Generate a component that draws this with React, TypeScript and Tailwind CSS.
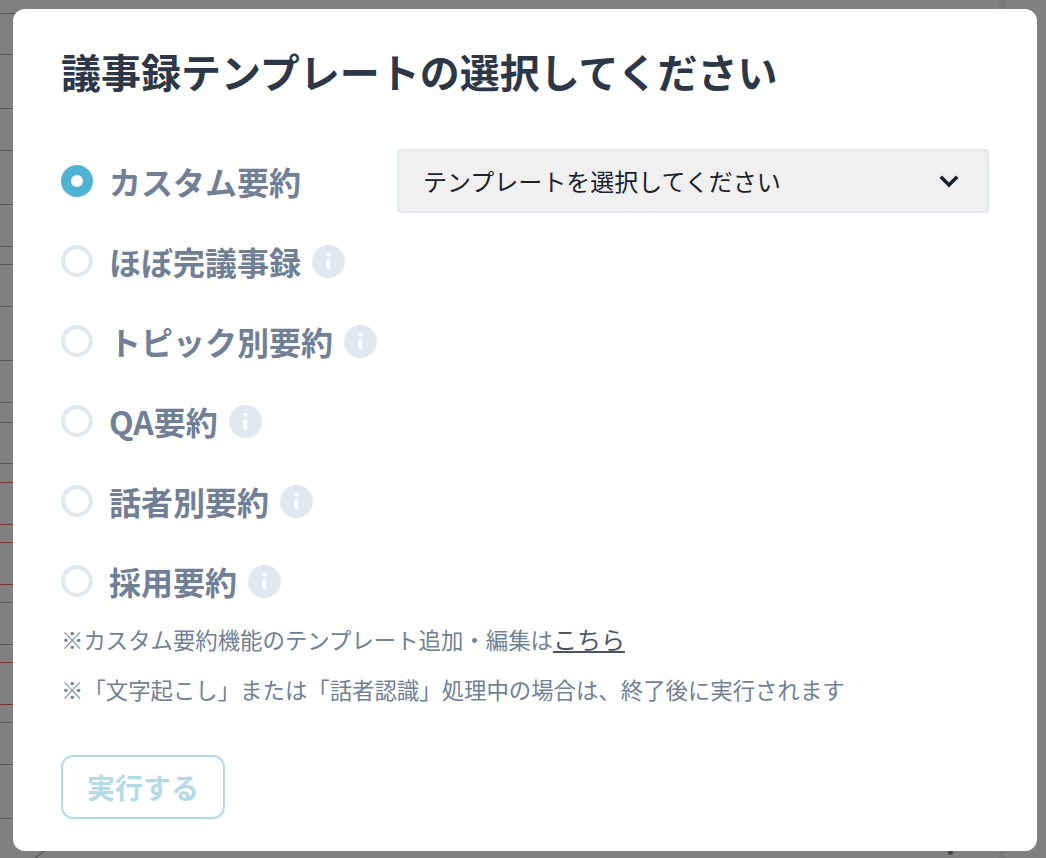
const backdropRows = [
  { h: 'h-[14px]', line: 'border-[#555555]' },
  { h: 'h-[41px]', line: 'border-[#555555]' },
  { h: 'h-[54px]', line: 'border-[#555555]' },
  { h: 'h-[42px]', line: 'border-[#555555]' },
  { h: 'h-[54px]', line: 'border-[#555555]' },
  { h: 'h-[42px]', line: 'border-[#555555]' },
  { h: 'h-[18px]', line: 'border-[#555555]' },
  { h: 'h-[42px]', line: 'border-[#555555]' },
  { h: 'h-[54px]', line: 'border-[#555555]' },
  { h: 'h-[42px]', line: 'border-[#555555]' },
  { h: 'h-[20px]', line: 'border-[#555555]' },
  { h: 'h-[41px]', line: 'border-[#555555]' },
  { h: 'h-[19px]', line: 'border-[#7a3434]' },
  { h: 'h-[42px]', line: 'border-[#7a3434]' },
  { h: 'h-[18px]', line: 'border-[#7a3434]' },
  { h: 'h-[42px]', line: 'border-[#7a3434]' },
  { h: 'h-[18px]', line: 'border-[#555555]' },
  { h: 'h-[42px]', line: 'border-[#555555]' },
  { h: 'h-[18px]', line: 'border-[#7a3434]' },
  { h: 'h-[42px]', line: 'border-[#7a3434]' },
  { h: 'h-[18px]', line: 'border-[#555555]' },
  { h: 'h-[42px]', line: 'border-[#555555]' },
  { h: 'h-[54px]', line: 'border-[#555555]' },
];

const options = [
  { label: 'カスタム要約', selected: true, info: false },
  { label: 'ほぼ完議事録', selected: false, info: true },
  { label: 'トピック別要約', selected: false, info: true },
  { label: 'QA要約', selected: false, info: true },
  { label: '話者別要約', selected: false, info: true },
  { label: '採用要約', selected: false, info: true },
];

const InfoBadge = () => (
  <svg viewBox="0 0 33 33" className="w-[33px] h-[33px] ml-[11px] shrink-0">
    <circle cx="16.5" cy="16.5" r="16.5" fill="#e2e8f0" />
    <rect x="14.7" y="8" width="3.6" height="3.6" rx="1" fill="#ffffff" />
    <rect x="14.7" y="14" width="3.6" height="11" rx="0.8" fill="#ffffff" />
  </svg>
);

const SelectChevron = () => (
  <svg viewBox="0 0 20 13" className="w-5 h-[13px] shrink-0" fill="none">
    <polyline points="1.8,1.8 10,10 18.2,1.8" stroke="#1a202c" strokeWidth="3.6" />
  </svg>
);

const App = () => {
  return (
    <div className="relative w-[1046px] h-[858px] overflow-hidden bg-[#808080] font-['Noto_Sans_CJK_JP','Noto_Sans',sans-serif]">
      {/* Dimmed page behind the modal */}
      <div className="flex flex-col w-[900px]">
        {backdropRows.map((row, i) => (
          <div key={i} className={`${row.h} border-b ${row.line} box-border`} />
        ))}
      </div>
      <div className="absolute left-[999px] top-0 w-[6px] h-full bg-[#7a7a7a]" />
      <svg viewBox="0 0 16 8" className="absolute left-[32px] top-[850px] w-4 h-2" fill="none">
        <path d="M13 0 Q9 4 3 8" stroke="#555555" strokeWidth="1.2" />
      </svg>
      <div className="absolute left-[948px] top-[850px] w-[5px] h-[5px] rounded-full bg-[#444444]" />

      <div className="absolute left-[13px] top-[9px] w-[1024px] h-[842px] rounded-xl bg-white pl-[48px] pr-[48px] pt-[32px]">
        <h2 className="text-[40px] leading-[60px] font-bold text-[#2d3748]">
          議事録テンプレートの選択してください
        </h2>

        <div className="mt-[48px] flex flex-col">
          {options.map((opt, i) => (
            <div key={i} className="flex items-center h-[64px] mb-[16px] last:mb-0">
              {opt.selected ? (
                <span className="w-8 h-8 rounded-full border-[10px] border-[#4fb3d4] bg-white shrink-0" />
              ) : (
                <span className="w-8 h-8 rounded-full border-[4px] border-[#e2e8f0] bg-white shrink-0" />
              )}
              <span className="ml-4 text-[32px] leading-[48px] font-bold text-[#718096]">{opt.label}</span>
              {opt.info && <InfoBadge />}
              {opt.selected && (
                <div className="ml-auto flex items-center justify-between w-[592px] h-[64px] rounded border-2 border-[#e2e8f0] bg-[#f0f0f0] pl-[24px] pr-[28px]">
                  <span className="text-[24px] leading-[36px] text-[#1a202c]">テンプレートを選択してください</span>
                  <SelectChevron />
                </div>
              )}
            </div>
          ))}
        </div>

        <p className="mt-[9px] text-[22.4px] leading-[34px] text-[#718096]">
          ※カスタム要約機能のテンプレート追加・編集は
          <span className="text-[24px] text-[#4a5568] underline">こちら</span>
        </p>
        <p className="mt-[16px] text-[22.4px] leading-[34px] text-[#718096]">
          ※「文字起こし」または「話者認識」処理中の場合は、終了後に実行されます
        </p>

        <button className="mt-[49px] flex items-center justify-center w-[164px] h-[64px] rounded-xl border-2 border-[#b3dae8] bg-white text-[28px] font-bold text-[#b3dae8]">
          実行する
        </button>
      </div>
    </div>
  );
};

export default App;
